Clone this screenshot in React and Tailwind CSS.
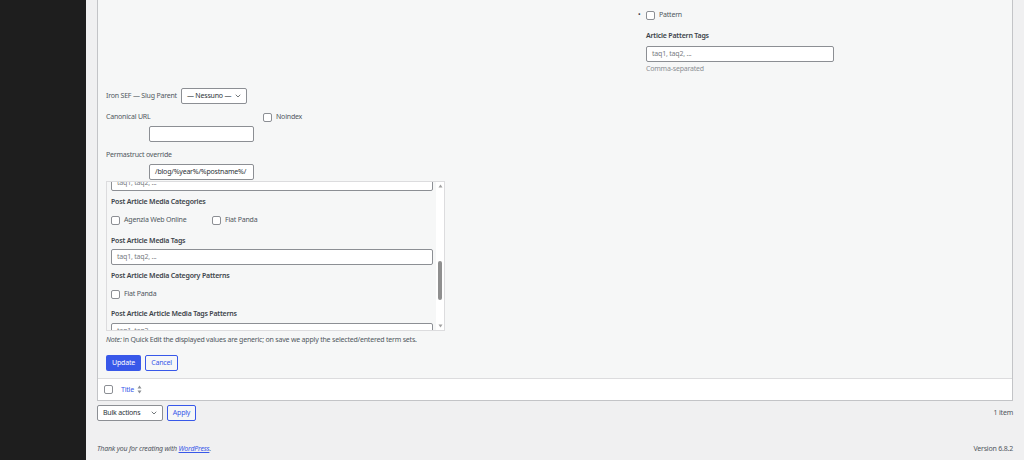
import { ChevronDown } from 'lucide-react';

function Checkbox() {
  return <span className="inline-block h-[9px] w-[9px] shrink-0 rounded-[2px] border border-[#8c8f94] bg-white" />;
}

function TextInput({ className = '', value, placeholder }) {
  return (
    <div className={`flex h-[16px] items-center overflow-hidden whitespace-nowrap rounded-[2px] border border-[#8c8f94] bg-white px-[5px] ${className}`}>
      {value ? <span className="text-[#2c3338]">{value}</span> : <span className="text-[#787c82]">{placeholder}</span>}
    </div>
  );
}

function Heading({ children, className = '' }) {
  return <div className={`h-[10px] whitespace-nowrap font-semibold leading-[10px] text-[#3c434a] ${className}`}>{children}</div>;
}

function CheckRow({ label, className = '' }) {
  return (
    <label className={`flex items-center gap-[4px] whitespace-nowrap ${className}`}>
      <Checkbox />
      <span className="text-[#50575e]">{label}</span>
    </label>
  );
}

export default function App() {
  return (
    <div className="flex h-[460px] w-[1024px] overflow-hidden whitespace-nowrap bg-[#f0f0f1] font-['Noto_Sans',sans-serif] text-[7px] leading-[10px] tracking-[-0.2px] text-[#3c434a]">
      <div className="w-[86px] shrink-0 bg-[#1e1e1e]" />

      <div className="flex flex-1 flex-col px-[11px]">
        <div className="border-x border-b border-[#c3c4c7] bg-white">
          {/* Quick edit panel */}
          <div className="bg-[#f6f7f7] pb-[7px] pl-[8px] pt-[10px]">
            <div className="grid grid-cols-[532px_1fr]">
              <div />
              <div className="flex flex-col">
                <div className="flex h-[10px] items-center">
                  <span className="w-[8px] text-[#3c434a]">•</span>
                  <CheckRow label="Pattern" />
                </div>
                <div className="pl-[8px]">
                  <Heading className="mt-[11px]">Article Pattern Tags</Heading>
                  <TextInput className="mt-[5px] w-[188px]" placeholder="taq1, taq2, ..." />
                  <div className="mt-[2px] h-[10px] text-[#8c8f94]">Comma-separated</div>
                </div>
              </div>
            </div>

            <div className="mt-[14px] flex h-[16px] items-center gap-[4px]">
              <span className="text-[#50575e]">Iron SEF — Slug Parent</span>
              <div className="flex h-[16px] w-[66px] items-center justify-between rounded-[2px] border border-[#8c8f94] bg-white pl-[5px] pr-[4px] text-[#2c3338]">
                <span>— Nessuno —</span>
                <ChevronDown size={8} strokeWidth={2} />
              </div>
            </div>

            <div className="mt-[8px] flex h-[10px] items-center">
              <span className="w-[157px] text-[#50575e]">Canonical URL</span>
              <CheckRow label="Noindex" />
            </div>
            <TextInput className="ml-[43px] mt-[4px] w-[105px]" />

            <div className="mt-[8px] h-[10px] text-[#50575e]">Permastruct override</div>
            <TextInput className="ml-[43px] mt-[4px] w-[105px]" value="/blog/%year%/%postname%/" />

            {/* scrolling taxonomy box */}
            <div className="mt-[1px] flex h-[150px] w-[339px] overflow-hidden border border-[#dcdcde]">
              <div className="flex flex-1 flex-col pl-[4px] pr-[3px]">
                <TextInput className="mt-[-7px] shrink-0" placeholder="taq1, taq2, ..." />
                <Heading className="mt-[6px]">Post Article Media Categories</Heading>
                <div className="mt-[8px] flex h-[10px] items-center">
                  <CheckRow label="Agenzia Web Online" className="w-[101px]" />
                  <CheckRow label="Fiat Panda" />
                </div>
                <Heading className="mt-[11px]">Post Article Media Tags</Heading>
                <TextInput className="mt-[3px] shrink-0" placeholder="taq1, taq2, ..." />
                <Heading className="mt-[6px]">Post Article Media Category Patterns</Heading>
                <CheckRow label="Fiat Panda" className="mt-[8px] h-[10px]" />
                <Heading className="mt-[10px]">Post Article Article Media Tags Patterns</Heading>
                <TextInput className="mt-[4px] shrink-0" placeholder="taq1, taq2, ..." />
              </div>
              <div className="flex w-[8px] flex-col items-center bg-white py-[2px]">
                <svg width="5" height="4" viewBox="0 0 5 4"><path d="M2.5 0.5L4.5 3.5H0.5Z" fill="#a0a0a0" /></svg>
                <div className="mt-[73px] h-[39px] w-[4px] rounded-full bg-[#8f8f8f]" />
                <div className="flex-1" />
                <svg width="5" height="4" viewBox="0 0 5 4"><path d="M0.5 0.5H4.5L2.5 3.5Z" fill="#a0a0a0" /></svg>
              </div>
            </div>

            <div className="mt-[4px] h-[10px] text-[#50575e]">
              <em>Note:</em> in Quick Edit the displayed values are generic; on save we apply the selected/entered term sets.
            </div>

            <div className="mt-[10px] flex gap-[4px]">
              <button className="h-[16px] w-[35px] rounded-[2px] bg-[#3858e9] text-white">Update</button>
              <button className="h-[16px] w-[33px] rounded-[2px] border border-[#3858e9] bg-[#f6f7f7] text-[#3858e9]">Cancel</button>
            </div>
          </div>

          {/* Table footer row */}
          <div className="flex h-[22px] items-center gap-[8px] border-t border-[#dcdcde] bg-white pl-[6px]">
            <Checkbox />
            <span className="flex items-center gap-[3px] text-[#3858e9]">
              Title
              <svg width="5" height="9" viewBox="0 0 5 9"><path d="M2.5 0.5L4.5 3.5H0.5Z M0.5 5.5H4.5L2.5 8.5Z" fill="#8c8f94" /></svg>
            </span>
          </div>
        </div>

        <div className="mt-[4px] flex items-center justify-between">
          <div className="flex gap-[4px]">
            <div className="flex h-[16px] w-[66px] items-center justify-between rounded-[2px] border border-[#8c8f94] bg-white pl-[5px] pr-[4px] text-[#2c3338]">
              <span>Bulk actions</span>
              <ChevronDown size={8} strokeWidth={2} />
            </div>
            <button className="h-[16px] w-[29px] rounded-[2px] border border-[#3858e9] bg-[#f6f7f7] text-[#3858e9]">Apply</button>
          </div>
          <span className="text-[#50575e]">1 item</span>
        </div>

        <div className="mt-auto flex items-center justify-between pb-[6px] text-[#50575e]">
          <span className="italic">
            Thank you for creating with <span className="text-[#3858e9] underline">WordPress</span>.
          </span>
          <span>Version 6.8.2</span>
        </div>
      </div>
    </div>
  );
}
